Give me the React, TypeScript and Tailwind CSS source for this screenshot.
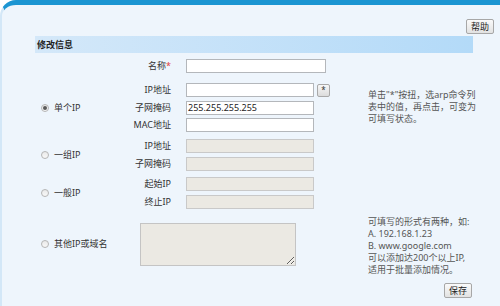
const font = { fontFamily: '"Noto Sans", "Noto Sans CJK SC", sans-serif' };

function Radio({ checked }: { checked?: boolean }) {
  return (
    <span className="flex h-[8px] w-[8px] shrink-0 items-center justify-center rounded-full border border-[#b5b5b5] bg-gradient-to-b from-[#e9e9e9] to-[#f8f8f8]">
      {checked && <span className="h-[4px] w-[4px] rounded-full bg-[#5a5a5a]" />}
    </span>
  );
}

function Field({ label, value, disabled, picker }: { label: string; value?: string; disabled?: boolean; picker?: boolean }) {
  return (
    <div className="flex items-center">
      <span className="w-[46px] shrink-0 text-right text-[#333]">{label}</span>
      <input
        readOnly
        value={value ?? ""}
        className={
          disabled
            ? "ml-[15px] h-[14px] w-[128px] shrink-0 border border-[#c9c9c9] bg-[#ebe9e3] px-[2px] outline-none"
            : "ml-[15px] h-[14px] w-[128px] shrink-0 border border-[#b4b7bb] bg-white px-[1px] text-[9px] text-[#222] outline-none"
        }
      />
      {picker && (
        <button
          type="button"
          className="ml-[3px] flex h-[13px] w-[13px] shrink-0 items-center justify-center rounded-[2px] border border-[#a9a9a9] bg-gradient-to-b from-[#f7f7f7] to-[#dcdcdc] text-[8px] leading-none text-[#333]"
        >
          *
        </button>
      )}
    </div>
  );
}

export default function App() {
  return (
    <div className="h-[306px] w-[500px] overflow-hidden bg-white text-[9px]" style={font}>
      <div className="h-full rounded-tl-[16px] border-t-[5px] border-l-[2px] border-t-[#1b95d2] border-l-[#d3e7f7] bg-[#eef5fc]">
        <div className="flex justify-end pt-[14px] pr-[6px]">
          <button
            type="button"
            className="h-[15px] w-[28px] rounded-[2px] border border-[#a7a7a7] bg-gradient-to-b from-[#fafafa] to-[#e2e2e2] text-[9px] leading-none text-[#222]"
          >
            帮助
          </button>
        </div>

        <div className="mt-[2px] ml-[33px] flex h-[17px] w-[438px] items-center bg-gradient-to-r from-[#d4e8f9] to-[#b3daf8] px-[2px] font-bold text-[#222]">
          修改信息
        </div>

        {/* name */}
        <div className="mt-[6px] flex items-center">
          <div className="w-[123px] shrink-0" />
          <span className="w-[46px] text-right text-[#333]">
            名称<span className="text-[#e04040]">*</span>
          </span>
          <input readOnly className="ml-[15px] h-[14px] w-[140px] border border-[#b4b7bb] bg-white outline-none" />
        </div>

        {/* single IP */}
        <div className="mt-[10px] flex">
          <div className="flex w-[123px] shrink-0 items-center gap-[5px] pl-[39px] text-[#333]">
            <Radio checked />
            <span>单个IP</span>
          </div>
          <div className="flex w-[205px] shrink-0 flex-col gap-[3.5px]">
            <Field label="IP地址" picker />
            <Field label="子网掩码" value="255.255.255.255" />
            <Field label="MAC地址" />
          </div>
          <div className="mt-[6px] ml-[38px] w-[112px] shrink-0 leading-[12px] text-[#555]">
            <p>单击"*"按扭，选arp命令列</p>
            <p>表中的值，再点击，可变为</p>
            <p>可填写状态。</p>
          </div>
        </div>

        {/* group IP */}
        <div className="mt-[7px] flex">
          <div className="flex w-[123px] shrink-0 items-center gap-[5px] pl-[39px] text-[#333]">
            <Radio />
            <span>一组IP</span>
          </div>
          <div className="flex flex-col gap-[3.5px]">
            <Field label="IP地址" disabled />
            <Field label="子网掩码" disabled />
          </div>
        </div>

        {/* range IP */}
        <div className="mt-[6.5px] flex">
          <div className="flex w-[123px] shrink-0 items-center gap-[5px] pl-[39px] text-[#333]">
            <Radio />
            <span>一般IP</span>
          </div>
          <div className="flex flex-col gap-[3.5px]">
            <Field label="起始IP" disabled />
            <Field label="终止IP" disabled />
          </div>
        </div>

        {/* other */}
        <div className="mt-[7px] flex items-start">
          <div className="mt-[7px] flex h-[43px] w-[123px] shrink-0 items-center gap-[5px] pl-[39px] text-[#333]">
            <Radio />
            <span>其他IP或域名</span>
          </div>
          <textarea
            readOnly
            className="mt-[7px] ml-[15px] h-[43px] w-[156px] shrink-0 resize border border-[#c4c4c4] bg-[#ebe9e3] outline-none"
          />
          <div className="ml-[72px] flex w-[104px] shrink-0 flex-col leading-[12px] text-[#555]">
            <p>可填写的形式有两种，如:</p>
            <p>A. 192.168.1.23</p>
            <p>B. www.google.com</p>
            <p>可以添加达200个以上IP,</p>
            <p>适用于批量添加情况。</p>
            <button
              type="button"
              className="mt-[7px] h-[15px] w-[28px] self-end rounded-[2px] border border-[#a7a7a7] bg-gradient-to-b from-[#fafafa] to-[#e2e2e2] text-[9px] leading-none text-[#222]"
            >
              保存
            </button>
          </div>
        </div>
      </div>
    </div>
  );
}
